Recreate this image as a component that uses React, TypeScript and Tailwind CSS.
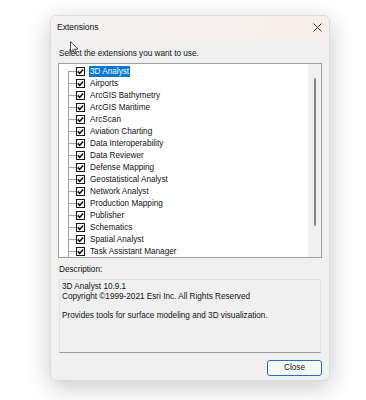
import React from "react";

const items = [
  "3D Analyst",
  "Airports",
  "ArcGIS Bathymetry",
  "ArcGIS Maritime",
  "ArcScan",
  "Aviation Charting",
  "Data Interoperability",
  "Data Reviewer",
  "Defense Mapping",
  "Geostatistical Analyst",
  "Network Analyst",
  "Production Mapping",
  "Publisher",
  "Schematics",
  "Spatial Analyst",
  "Task Assistant Manager",
];

function Check() {
  return (
    <div className="w-[9px] h-[9px] border border-[#1a1a1a] bg-white flex items-center justify-center shrink-0">
      <svg width="7" height="7" viewBox="0 0 7 7">
        <path d="M0.8 3.4 L2.7 5.3 L6.2 1.4" stroke="#111" strokeWidth="1.5" fill="none" />
      </svg>
    </div>
  );
}

export default function App() {
  return (
    <div
      className="relative w-[366px] h-[400px] bg-white overflow-hidden"
      style={{ fontFamily: '"Liberation Sans", Arial, sans-serif' }}
    >
      <div className="absolute left-[50px] top-[15px] w-[280px] h-[366px] rounded-[6px] bg-[#f0f0f0] border border-[#dcdcdc] shadow-[0_6px_24px_rgba(0,0,0,0.22)] flex flex-col overflow-hidden">
        {/* title bar */}
        <div className="h-[23px] shrink-0 flex items-center justify-between pl-[6px] pr-[7px] bg-gradient-to-r from-[#f3f2f2] to-[#f8eeea]">
          <span className="text-[8.5px] text-[#111]">Extensions</span>
          <svg width="9" height="9" viewBox="0 0 9 9">
            <path d="M0.5 0.5 L8.5 8.5 M8.5 0.5 L0.5 8.5" stroke="#333" strokeWidth="1" />
          </svg>
        </div>
        {/* body */}
        <div className="flex flex-col pl-[7px] pr-[7px] pt-[10px]">
          <div className="text-[8.2px] leading-[10px] text-[#111] pl-[1px]">
            Select the extensions you want to use.
          </div>
          <div className="mt-[4px] h-[195px] w-[264px] border border-[#9f9f9f] bg-white flex overflow-hidden">
            <div className="relative flex-1 pt-[1px] overflow-hidden">
              <div className="absolute left-[9px] top-[7px] bottom-0 w-px bg-[#a0a0a0]" />
              {items.map((t, i) => (
                <div key={t} className="h-[12px] flex items-center">
                  <div className="w-[9px] shrink-0" />
                  <div className="w-[8px] h-px bg-[#a0a0a0] shrink-0" />
                  <Check />
                  <div className="w-[4px] shrink-0" />
                  <span
                    className={
                      "text-[8.2px] leading-[11px] px-[1px] whitespace-nowrap " +
                      (i === 0 ? "bg-[#0078d7] text-white" : "text-[#111]")
                    }
                  >
                    {t}
                  </span>
                </div>
              ))}
            </div>
            <div className="w-[13px] bg-[#f0f0f0] flex justify-center pt-[14px] pb-[31px] shrink-0">
              <div className="w-[2px] h-full bg-[#858585] rounded-full" />
            </div>
          </div>
          <div className="mt-[7px] text-[8.2px] leading-[10px] text-[#111] pl-[1px]">Description:</div>
          <div className="mt-[4px] ml-[1px] w-[262px] h-[74px] border border-[#e2e2e2] border-b-[#9a9a9a] bg-[#f0f0f0] px-[2px] pt-[2px] text-[8.2px] leading-[9.7px] text-[#111]">
            <div>3D Analyst 10.9.1</div>
            <div>Copyright ©1999-2021 Esri Inc. All Rights Reserved</div>
            <div>&nbsp;</div>
            <div>Provides tools for surface modeling and 3D visualization.</div>
          </div>
          <div className="flex justify-end mt-[7px]">
            <button className="w-[55px] h-[16px] rounded-[3px] border border-[#1f6fbf] bg-[#fbfbfb] text-[8.2px] text-[#111] flex items-center justify-center">
              Close
            </button>
          </div>
        </div>
      </div>
      {/* mouse cursor */}
      <svg className="absolute left-[70px] top-[41px]" width="9" height="14" viewBox="0 0 9 14">
        <path d="M0.5 0.5 L0.5 11 L3 8.6 L4.8 12.8 L6.3 12.2 L4.6 8.1 L8 8.1 Z" fill="white" stroke="#222" strokeWidth="0.8" />
      </svg>
    </div>
  );
}
